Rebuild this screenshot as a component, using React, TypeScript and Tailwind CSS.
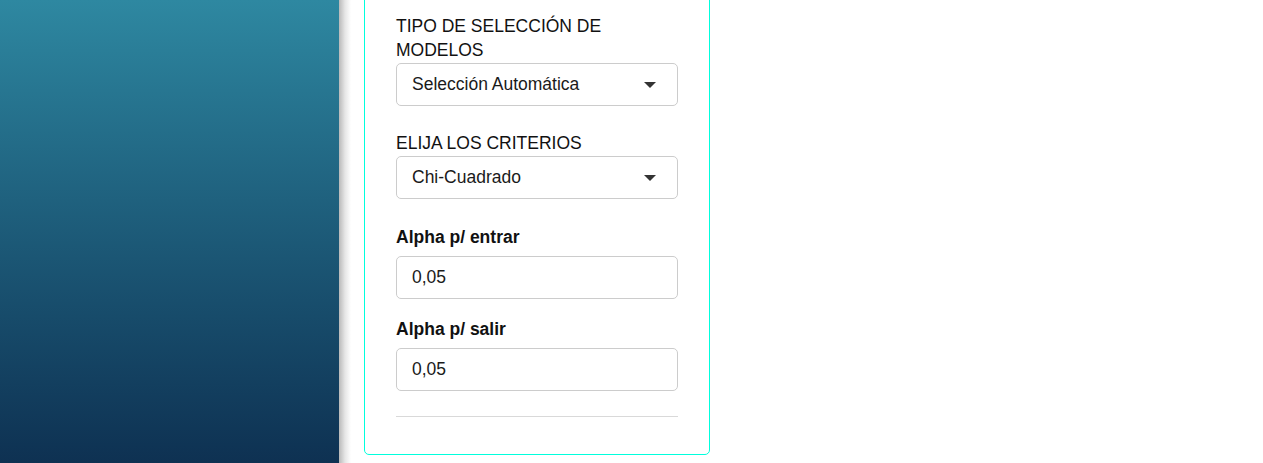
import { useState } from 'react'

function Caret() {
  return (
    <svg width="12" height="6" viewBox="0 0 12 6" className="shrink-0">
      <path d="M0 0h12L6 6z" fill="#333" />
    </svg>
  )
}

function FakeSelect({ value }: { value: string }) {
  return (
    <div className="h-[43px] w-full flex items-center justify-between border border-[#cccccc] rounded-[5px] bg-white pl-[15px] pr-[21px] text-[#1a1a1a]">
      <span>{value}</span>
      <Caret />
    </div>
  )
}

export default function App() {
  const [alphaIn, setAlphaIn] = useState('0,05')
  const [alphaOut, setAlphaOut] = useState('0,05')

  return (
    <div
      className="flex h-[463px] w-full overflow-hidden bg-white text-[17.5px]"
      style={{ fontFamily: '"Liberation Sans", Arial, sans-serif' }}
    >
      {/* sidebar */}
      <div className="w-[339px] shrink-0 bg-gradient-to-b from-[#2e88a1] to-[#0e3152]" />
      <div className="w-[12px] shrink-0 bg-gradient-to-r from-[#b9b9b9] via-[#e6e6e6] to-white" />

      <div className="pl-[13px]">
        <div className="-mt-[19px] w-[346px] border border-[#00ffdd] rounded-[5px] bg-white px-[31px] pt-[32px] pb-[37px]">
          <div className="leading-[24px] text-[#111]">TIPO DE SELECCIÓN DE MODELOS</div>
          <div className="mt-[1px]">
            <FakeSelect value="Selección Automática" />
          </div>

          <div className="mt-[25px] leading-[24px] text-[#111]">ELIJA LOS CRITERIOS</div>
          <div className="mt-[1px]">
            <FakeSelect value="Chi-Cuadrado" />
          </div>

          <div className="mt-[26px] leading-[24px] font-bold text-[#111]">Alpha p/ entrar</div>
          <input
            value={alphaIn}
            onChange={e => setAlphaIn(e.target.value)}
            className="mt-[7px] block h-[43px] w-full border border-[#cccccc] rounded-[5px] pl-[15px] text-[#1a1a1a] outline-none"
          />

          <div className="mt-[18px] leading-[24px] font-bold text-[#111]">Alpha p/ salir</div>
          <input
            value={alphaOut}
            onChange={e => setAlphaOut(e.target.value)}
            className="mt-[7px] block h-[43px] w-full border border-[#cccccc] rounded-[5px] pl-[15px] text-[#1a1a1a] outline-none"
          />

          <hr className="mt-[25px] border-t border-[#d9d9d9]" />
        </div>
      </div>
    </div>
  )
}
